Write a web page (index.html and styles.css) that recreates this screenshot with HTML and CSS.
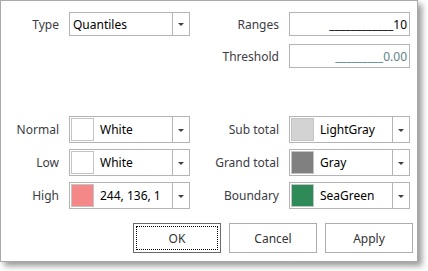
FILE: index.html
```html
<html>
	<head>
        <title>Range settings</title>
        <meta charset="utf-8">
        <link rel="stylesheet" href="styles.css">
	</head>
	<body>
        <div id="janela">
            <div class="grade topo">
                <label class="rotulo">Type</label>
                <div class="combo">
                    <span class="valor">Quantiles</span>
                    <span class="seta"></span>
                </div>
                <label class="rotulo">Ranges</label>
                <div class="edit">____________10</div>

                <span></span>
                <span></span>
                <label class="rotulo">Threshold</label>
                <div class="edit desativado">_________0.00</div>
            </div>

            <div class="grade cores">
                <label class="rotulo">Normal</label>
                <div class="combo cor">
                    <span class="amostra" style="background-color: #ffffff"></span>
                    <span class="valor">White</span>
                    <span class="seta"></span>
                </div>
                <label class="rotulo">Sub total</label>
                <div class="combo cor">
                    <span class="amostra" style="background-color: #d3d3d3"></span>
                    <span class="valor">LightGray</span>
                    <span class="seta"></span>
                </div>

                <label class="rotulo">Low</label>
                <div class="combo cor">
                    <span class="amostra" style="background-color: #ffffff"></span>
                    <span class="valor">White</span>
                    <span class="seta"></span>
                </div>
                <label class="rotulo">Grand total</label>
                <div class="combo cor">
                    <span class="amostra" style="background-color: #808080"></span>
                    <span class="valor">Gray</span>
                    <span class="seta"></span>
                </div>

                <label class="rotulo">High</label>
                <div class="combo cor">
                    <span class="amostra" style="background-color: #f48888"></span>
                    <span class="valor">244, 136, 1</span>
                    <span class="seta"></span>
                </div>
                <label class="rotulo">Boundary</label>
                <div class="combo cor">
                    <span class="amostra" style="background-color: #2e8b57"></span>
                    <span class="valor">SeaGreen</span>
                    <span class="seta"></span>
                </div>
            </div>

            <div class="botoes">
                <button id="ok">OK</button>
                <button>Cancel</button>
                <button>Apply</button>
            </div>
        </div>
	</body>
</html>
```

FILE: styles.css
```css
body{
    margin: 0;
    background-color: #ffffff;
    font-family: "Noto Sans", "Open Sans", sans-serif;
    font-size: 12px;
}
#janela{
    box-sizing: border-box;
    width: 418px;
    height: 262px;
    padding-top: 11px;
    background-color: #ffffff;
    border: 1px solid #a9a9a9;
    box-shadow: 4px 4px 6px rgba(0, 0, 0, 0.4);
}
.grade{
    display: grid;
    grid-template-columns: 68px 121px 99px 121px;
}
.topo{
    grid-auto-rows: 24px;
    row-gap: 8px;
}
.cores{
    margin-top: 48px;
    grid-auto-rows: 27px;
    row-gap: 6px;
}
.rotulo{
    display: flex;
    align-items: center;
    justify-content: flex-end;
    padding-right: 10px;
    color: #3c3c44;
    white-space: nowrap;
}
.combo{
    display: flex;
    box-sizing: border-box;
    border: 1px solid #b4b4b4;
    color: #000000;
}
.valor{
    flex: 1;
    display: flex;
    align-items: center;
    padding-left: 3px;
    white-space: nowrap;
    overflow: hidden;
}
.seta{
    position: relative;
    width: 16px;
    border-left: 1px solid #b4b4b4;
}
.seta::after{
    content: "";
    position: absolute;
    left: 5px;
    top: 50%;
    margin-top: -1px;
    border-left: 3px solid transparent;
    border-right: 3px solid transparent;
    border-top: 3px solid #404040;
}
.cor .valor{
    padding-left: 6px;
}
.amostra{
    box-sizing: border-box;
    width: 23px;
    margin: 1px 0 1px 1px;
    border: 1px solid #c4c4c4;
}
.edit{
    box-sizing: border-box;
    border: 1px solid #b4b4b4;
    display: flex;
    align-items: center;
    justify-content: flex-end;
    padding-right: 2px;
    color: #000000;
    white-space: nowrap;
}
.desativado{
    color: #5b8585;
}
.botoes{
    display: flex;
    justify-content: flex-end;
    gap: 8px;
    margin-top: 14px;
    padding-right: 4px;
}
button{
    width: 88px;
    height: 30px;
    border: 1px solid #adadad;
    background-color: #ffffff;
    font-family: "Noto Sans", "Open Sans", sans-serif;
    font-size: 12px;
    color: #333333;
}
#ok{
    border-color: #6a6a6a;
    outline: 1px dotted #000000;
    outline-offset: -4px;
}
```
